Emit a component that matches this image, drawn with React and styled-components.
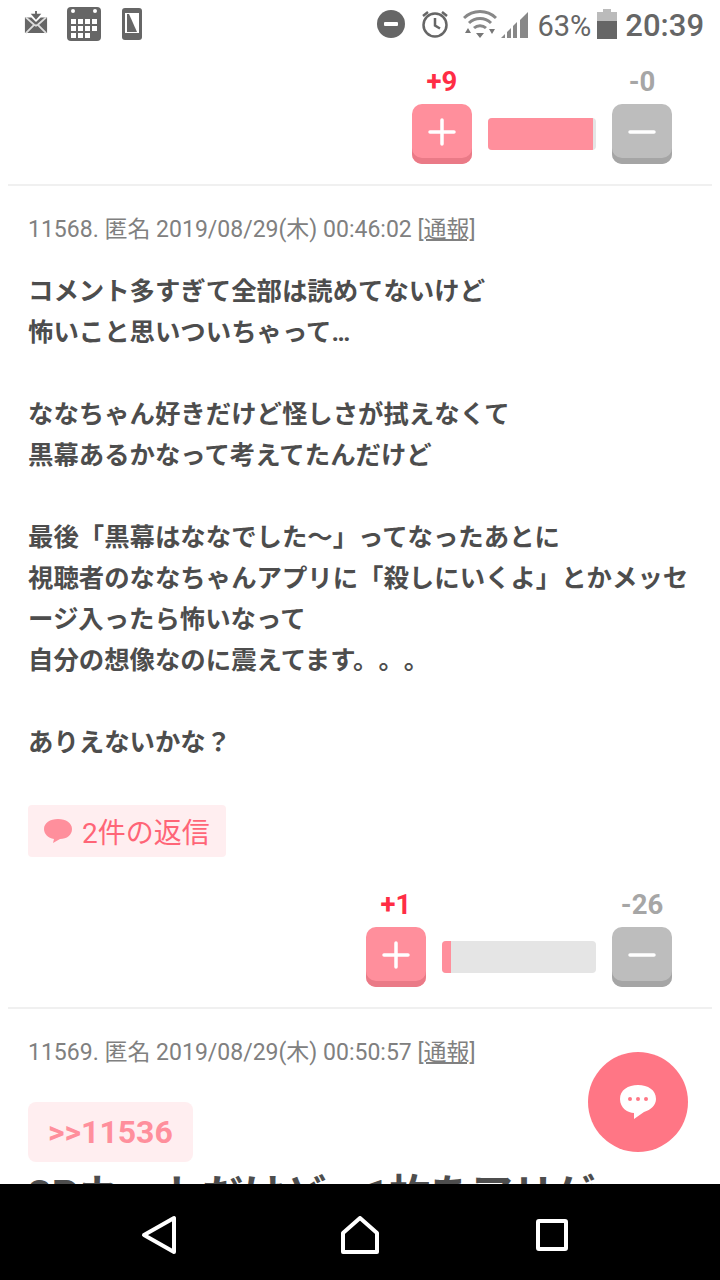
import React from 'react';
import styled, { createGlobalStyle } from 'styled-components';

const Global = createGlobalStyle`
  html, body { margin: 0; padding: 0; background: #fff; }
  body {
    font-family: "Roboto", "Noto Sans CJK JP", sans-serif;
    text-spacing-trim: space-all;
  }
`

const Screen = styled.div`
  width: 720px;
  height: 1280px;
  display: flex;
  flex-direction: column;
  position: relative;
  overflow: hidden;
  background: #fff;
`
const StatusBar = styled.div`
  height: 48px;
  flex: none;
  display: flex;
  align-items: center;
  justify-content: space-between;
  padding: 0 16px 0 24px;
  color: #666;
`
const StatusGroup = styled.div`
  display: flex;
  align-items: center;
`
const StatusIcon = styled.svg`
  flex: none;
  margin-left: ${p => p.$left || 0}px;
  margin-bottom: ${p => p.$lift || 0}px;
`
const StatusPct = styled.span`
  font-size: 29px;
  color: #666;
  margin-left: 9px;
  padding-top: 3px;
`
const StatusClock = styled.span`
  font-size: 31px;
  font-weight: 500;
  color: #666;
  margin-left: 8px;
  padding-top: 2px;
`
const Content = styled.div`
  flex: 1;
  overflow: hidden;
  padding: 0 8px;
`
const VoteRow = styled.div`
  display: flex;
  justify-content: flex-end;
  align-items: flex-end;
  gap: 16px;
  padding: 0 40px 20px 0;
  margin-top: ${p => p.$top}px;
  border-bottom: 2px solid #f0f0f0;
`
const VoteCol = styled.div`
  width: 60px;
  display: flex;
  flex-direction: column;
  align-items: center;
`
const Count = styled.div`
  font-size: 27.5px;
  font-weight: 700;
  line-height: 35px;
  height: 40px;
  color: ${p => (p.$plus ? '#ff2d45' : '#a6a6a6')};
`
const VoteButton = styled.div`
  width: 60px;
  height: 60px;
  box-sizing: border-box;
  padding-bottom: 5px;
  border-radius: 10px;
  display: flex;
  align-items: center;
  justify-content: center;
  background: ${p => (p.$plus ? '#ff8f9c' : '#bdbdbd')};
  box-shadow: inset 0 -6px 0 ${p => (p.$plus ? '#ea7a87' : '#a5a5a5')};
`
const Bar = styled.div`
  width: ${p => p.$width}px;
  height: 32px;
  margin-bottom: 14px;
  border-radius: 4px;
  background: #e5e5e5;
  overflow: hidden;
`
const BarFill = styled.div`
  height: 100%;
  background: #ff8f9c;
`
const Meta = styled.div`
  font-size: 23px;
  line-height: 32px;
  color: #808080;
  padding: 0 20px;
  margin-top: 28px;
  white-space: nowrap;
`
const Report = styled.span`
  text-decoration: underline;
`
const Body = styled.div`
  font-size: 25.4px;
  font-weight: 700;
  line-height: 41px;
  color: #4d4d4d;
  padding: 0 20px;
  margin-top: 25px;
  white-space: pre-line;
`
const ReplyTag = styled.div`
  display: inline-flex;
  align-items: center;
  gap: 9px;
  height: 52px;
  margin: 42px 0 0 20px;
  padding: 0 16px 0 15px;
  border-radius: 4px;
  background: #ffeef0;
  color: #ff6577;
  font-size: 28px;
`
const Anchor = styled.div`
  display: inline-block;
  height: 60px;
  line-height: 60px;
  padding: 0 20px;
  margin: 33px 0 0 20px;
  border-radius: 8px;
  background: #ffeef0;
  color: #ff8f9c;
  font-size: 32px;
  font-weight: 700;
`
const ClippedTitle = styled.div`
  font-size: 41.3px;
  font-weight: 700;
  line-height: 54px;
  color: #4d4d4d;
  padding: 0 20px;
  margin-top: 6px;
  white-space: nowrap;
`
const Fab = styled.div`
  position: absolute;
  right: 32px;
  bottom: 128px;
  width: 100px;
  height: 100px;
  border-radius: 50%;
  background: #ff7685;
  display: flex;
  align-items: center;
  justify-content: center;
`
const NavBar = styled.div`
  height: 96px;
  box-sizing: border-box;
  padding-top: 5px;
  flex: none;
  background: #000;
  display: flex;
  align-items: center;
  justify-content: center;
`
const NavSlot = styled.div`
  width: 192px;
  display: flex;
  justify-content: center;
`

const Plus = () => (
  <svg width="30" height="30" viewBox="0 0 30 30">
    <path d="M15 3v24M3 15h24" stroke="#fff" strokeWidth="3.5" strokeLinecap="round" />
  </svg>
)
const Minus = () => (
  <svg width="30" height="30" viewBox="0 0 30 30">
    <path d="M3 15h24" stroke="#fff" strokeWidth="3.5" strokeLinecap="round" />
  </svg>
)

const Vote = ({ plus, minus, fill, width }) => (
  <>
    <VoteCol>
      <Count $plus>{plus}</Count>
      <VoteButton $plus><Plus /></VoteButton>
    </VoteCol>
    <Bar $width={width}>
      <BarFill style={{ width: fill }} />
    </Bar>
    <VoteCol>
      <Count>{minus}</Count>
      <VoteButton><Minus /></VoteButton>
    </VoteCol>
  </>
)

const text = `コメント多すぎて全部は読めてないけど
怖いこと思いついちゃって…

ななちゃん好きだけど怪しさが拭えなくて
黒幕あるかなって考えてたんだけど

最後「黒幕はななでした〜」ってなったあとに
視聴者のななちゃんアプリに「殺しにいくよ」とかメッセ
ージ入ったら怖いなって
自分の想像なのに震えてます。。。

ありえないかな？`

export default function App() {
  return (
    <Screen>
      <Global />
      <StatusBar>
        <StatusGroup>
          <StatusIcon $lift={5} width="24" height="24" viewBox="0 0 26 26">
            <path d="M13 1v5M9.500 5 13 9l3.500-4z" fill="#666" stroke="#666" strokeWidth="2" />
            <path d="M1 8h7l5 5 5-5h7v17H1z" fill="#666" />
            <path d="M2 8l9 8M24 8l-9 8M2 25l9-9 2 1 2-1 9 9" stroke="#ddd" strokeWidth="2" fill="none" />
          </StatusIcon>
          <StatusIcon $left={19} width="34" height="36" viewBox="0 0 34 36">
            <rect width="34" height="34" y="1" rx="4" fill="#666" />
            <circle cx="6" cy="5" r="2" fill="#fff" />
            <circle cx="28" cy="5" r="2" fill="#fff" />
            {[0, 1, 2].map(r => [0, 1, 2, 3].filter(c => r < 2 || c < 3).map(c => (
              <rect key={`${r}${c}`} x={4 + c * 7} y={13 + r * 7} width="5" height="5" fill="#fff" />
            )))}
          </StatusIcon>
          <StatusIcon $left={21} width="20" height="32" viewBox="0 0 20 32">
            <rect width="20" height="32" rx="3" fill="#666" />
            <rect x="3" y="5" width="14" height="20" fill="#fff" />
            <path d="M5 6h2l8 18H5z" fill="#666" />
          </StatusIcon>
        </StatusGroup>
        <StatusGroup>
          <StatusIcon width="28" height="28" viewBox="0 0 28 28">
            <circle cx="14" cy="14" r="14" fill="#666" />
            <rect x="7" y="12" width="14" height="4" rx="1" fill="#fff" />
          </StatusIcon>
          <StatusIcon $left={16} width="28" height="28" viewBox="0 0 28 28">
            <circle cx="14" cy="15" r="11.500" fill="none" stroke="#666" strokeWidth="2.500" />
            <path d="M14 8v7.500l5 3M2 6l5-4M26 6l-5-4" fill="none" stroke="#666" strokeWidth="2.500" />
          </StatusIcon>
          <StatusIcon $left={14} width="34" height="28" viewBox="0 0 34 28">
            <path d="M1 8a23 23 0 0 1 32 0M6 13a16 16 0 0 1 22 0M11 18a9 9 0 0 1 12 0" fill="none" stroke="#888" strokeWidth="3" />
            <path d="M13 23h8l-4 5zM2 23h6l-3-5zM26 19h6l-3 5z" fill="#777" />
          </StatusIcon>
          <StatusIcon $left={4} width="28" height="28" viewBox="0 0 28 28">
            <path d="M0 28 4 24v4zM6 22l4-4v10H6zM12 16l4-4v16h-4zM19 10l8-8v26h-8z" fill="#888" />
          </StatusIcon>
          <StatusPct>63%</StatusPct>
          <StatusIcon $left={6} width="20" height="30" viewBox="0 0 20 30">
            <path d="M6 0h8v3h6v10H0V3h6z" fill="#bbb" />
            <rect y="12" width="20" height="18" fill="#666" />
          </StatusIcon>
          <StatusClock>20:39</StatusClock>
        </StatusGroup>
      </StatusBar>
      <Content>
        <VoteRow $top={16}>
          <Vote plus="+9" minus="-0" fill="105px" width={108} />
        </VoteRow>
        <Meta>11568. 匿名 2019/08/29(木) 00:46:02 <Report>[通報]</Report></Meta>
        <Body>{text}</Body>
        <ReplyTag>
          <svg width="30" height="26" viewBox="0 0 30 26">
            <path d="M15 1C7 1 1 5 1 11c0 5 4 9 10 10l-1 4 7-4c7 0 12-4 12-10S23 1 15 1z" fill="#ff8f9c" />
          </svg>
          2件の返信
        </ReplyTag>
        <VoteRow $top={30}>
          <Vote plus="+1" minus="-26" fill="9px" width={154} />
        </VoteRow>
        <Meta>11569. 匿名 2019/08/29(木) 00:50:57 <Report>[通報]</Report></Meta>
        <Anchor>&gt;&gt;11536</Anchor>
        <ClippedTitle>3Pカットだけど、1枚をアリゲ</ClippedTitle>
      </Content>
      <Fab>
        <svg width="38" height="46" viewBox="0 0 38 46">
          <path d="M19 6C9 6 1 11 1 20s8 14 14 14v6l10-7c7-2 12-7 12-13C37 11 29 6 19 6z" fill="#fff" />
          <circle cx="11" cy="20" r="2" fill="#ff7685" />
          <circle cx="19" cy="20" r="2" fill="#ff7685" />
          <circle cx="27" cy="20" r="2" fill="#ff7685" />
        </svg>
      </Fab>
      <NavBar>
        <NavSlot>
          <svg width="54" height="40" viewBox="0 0 54 40">
            <path d="M33 3v34L3 20z" fill="none" stroke="#fff" strokeWidth="4" strokeLinejoin="round" />
          </svg>
        </NavSlot>
        <NavSlot>
          <svg width="38" height="38" viewBox="0 0 38 38">
            <path d="M2 36V17L19 2l17 15v19z" fill="none" stroke="#fff" strokeWidth="4" strokeLinejoin="round" />
          </svg>
        </NavSlot>
        <NavSlot>
          <svg width="32" height="32" viewBox="0 0 32 32">
            <rect x="2" y="2" width="28" height="28" rx="1" fill="none" stroke="#fff" strokeWidth="4" />
          </svg>
        </NavSlot>
      </NavBar>
    </Screen>
  )
}
